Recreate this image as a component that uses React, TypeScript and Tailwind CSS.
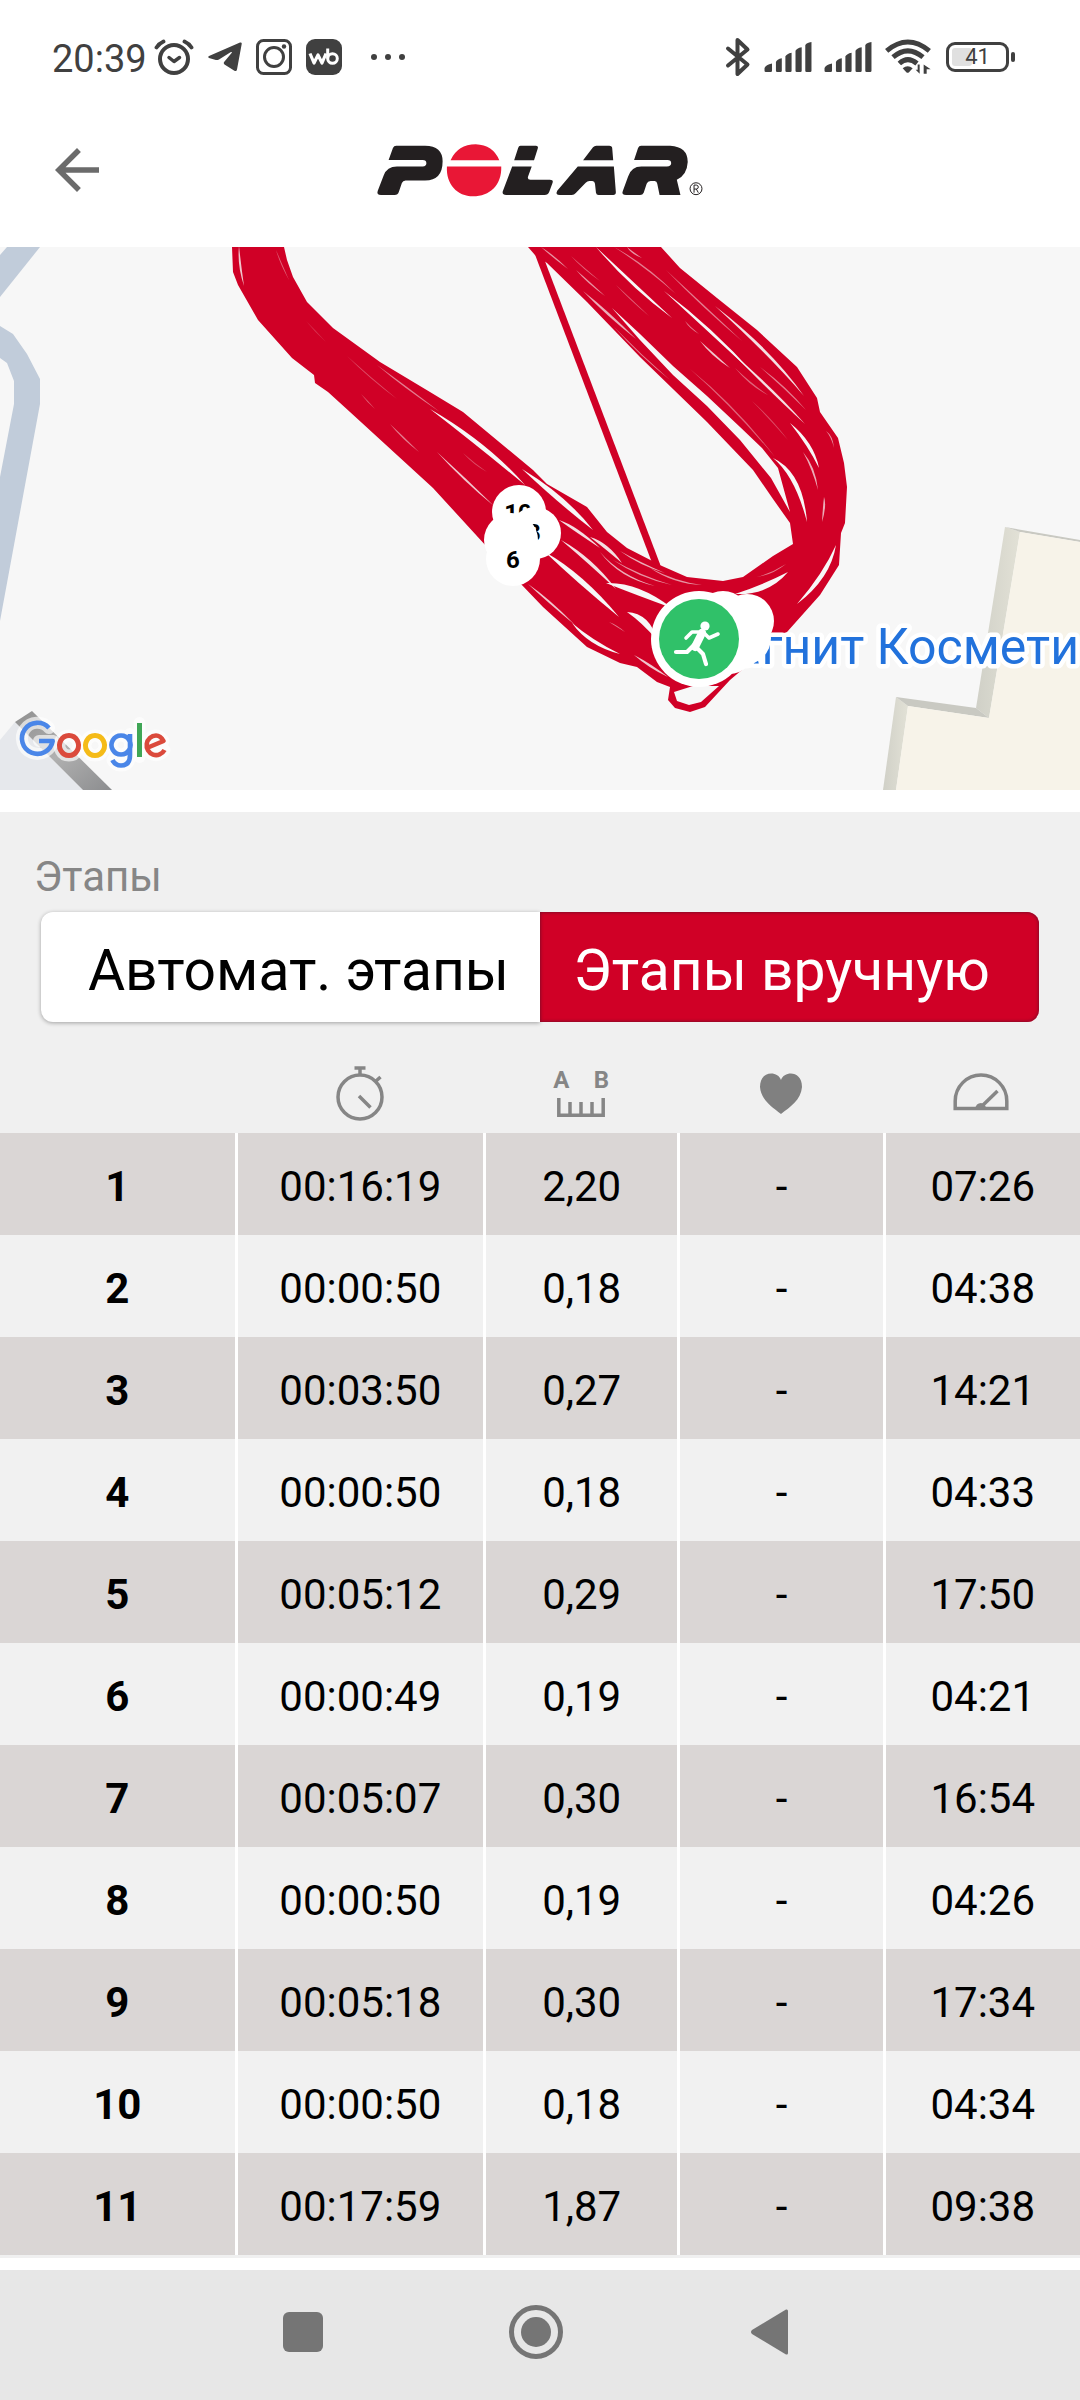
import React, { useState } from "react";

const INK = "#404040";
const ROUTE = "#d00026";
const LAND = "#f7f7f7";

const laps = [
  { n: 1, time: "00:16:19", dist: "2,20", hr: "-", pace: "07:26" },
  { n: 2, time: "00:00:50", dist: "0,18", hr: "-", pace: "04:38" },
  { n: 3, time: "00:03:50", dist: "0,27", hr: "-", pace: "14:21" },
  { n: 4, time: "00:00:50", dist: "0,18", hr: "-", pace: "04:33" },
  { n: 5, time: "00:05:12", dist: "0,29", hr: "-", pace: "17:50" },
  { n: 6, time: "00:00:49", dist: "0,19", hr: "-", pace: "04:21" },
  { n: 7, time: "00:05:07", dist: "0,30", hr: "-", pace: "16:54" },
  { n: 8, time: "00:00:50", dist: "0,19", hr: "-", pace: "04:26" },
  { n: 9, time: "00:05:18", dist: "0,30", hr: "-", pace: "17:34" },
  { n: 10, time: "00:00:50", dist: "0,18", hr: "-", pace: "04:34" },
  { n: 11, time: "00:17:59", dist: "1,87", hr: "-", pace: "09:38" },
];

function SignalBars() {
  return (
    <svg viewBox="0 0 144 92" className="h-[30px] w-12" fill={INK} aria-hidden="true">
      <path d="M0 80Q4 70 23 66V88Q23 92 19 92H4Q0 92 0 88ZM35 61Q38 53 53 50V88Q53 92 49 92H39Q35 92 35 88ZM64 44Q68 36 83 33V88Q83 92 79 92H68Q64 92 64 88ZM95 27Q98 19 114 16V88Q114 92 110 92H99Q95 92 95 88ZM125 10Q128 2 144 0V88Q144 92 140 92H129Q125 92 125 88Z" />
    </svg>
  );
}

function StatusBar() {
  return (
    <div className="flex h-[93px] items-center pt-5 pr-[65px] pl-[52px] text-[#404040]">
      <span className="pt-1 text-[38px] leading-10">20:39</span>
      <svg viewBox="0 0 40 36" className="ml-[7px] h-9 w-10" fill="none" stroke={INK} strokeLinecap="round" aria-hidden="true">
        <circle cx="20" cy="20" r="14" strokeWidth="4" />
        <path d="M15 18.500l5 4 5.500-4" strokeWidth="3.500" strokeLinejoin="round" />
        <path d="M2.500 8.500Q5 4.500 9.500 2.500M37.500 8.500Q35 4.500 30.500 2.500" strokeWidth="3.800" />
      </svg>
      <svg viewBox="0 0 34 30" className="ml-[14px] h-[30px] w-[34px]" fill={INK} aria-hidden="true">
        <path d="M1 14L32 .5Q34 0 33.700 2L29 27.500Q28.500 30 26 28.500L16.500 22.500Q15 21 16.500 19.500L24 10.500Q24 9.500 22.500 10.200L11 17.500Q9 18.500 7 17.800L1 16Q-.5 15 1 14Z" />
      </svg>
      <svg viewBox="0 0 36 36" className="ml-[14px] size-9" fill="none" stroke={INK} aria-hidden="true">
        <rect x="1.500" y="1.500" width="33" height="33" rx="6" strokeWidth="3" />
        <circle cx="18" cy="18" r="9.500" strokeWidth="3" />
        <circle cx="28" cy="7.500" r="2.200" fill={INK} stroke="none" />
      </svg>
      <svg viewBox="0 0 36 36" className="ml-[14px] size-9" aria-hidden="true">
        <rect width="36" height="36" rx="9" fill={INK} />
        <path d="M4 14.500l4 9.500 4-8 4 8 4-9.500" fill="none" stroke="#fff" strokeWidth="3.200" strokeLinejoin="round" />
        <circle cx="26.500" cy="19.500" r="4.800" fill="none" stroke="#fff" strokeWidth="3" />
        <path d="M21.700 9.500v10" stroke="#fff" strokeWidth="3" />
      </svg>
      <svg viewBox="0 0 36 8" className="ml-7 h-2 w-9" fill={INK} aria-hidden="true">
        <circle cx="4" cy="4" r="3" />
        <circle cx="18" cy="4" r="3" />
        <circle cx="32" cy="4" r="3" />
      </svg>
      <svg viewBox="0 0 26 40" className="ml-auto h-10 w-[26px]" fill="none" stroke={INK} strokeWidth="4" strokeLinejoin="round" strokeLinecap="round" aria-hidden="true">
        <path d="M3 11.500L22.500 27.500L12.500 37V3L22.500 12.500L3 28.500" />
      </svg>
      <div className="ml-[13px] flex items-center gap-3">
        <SignalBars />
        <SignalBars />
      </div>
      <svg viewBox="0 0 138 104" className="ml-[13px] h-[35px] w-[46px]" fill="none" stroke={INK} strokeWidth="15" aria-hidden="true">
        <path d="M5 35Q68 -18 133 35M24 54Q68 16 114 54M43 73Q68 50 96 73" />
        <path d="M53 87Q68 75 83 87L72 99Q68 103 64 99Z" fill={INK} stroke="none" />
        <path d="M104 76V104L92 92H98V76ZM116 104V76L137 90H125V104Z" fill={INK} stroke="none" />
      </svg>
      <div className="ml-[15px] flex items-center gap-[2px]">
        <div className="relative flex h-[30px] w-[63px] items-center justify-center rounded-[9px] border-3 border-[#404040]">
          <div className="absolute top-[3px] bottom-[3px] left-[3px] w-5 rounded-[3px] bg-[#e0e0e0]" />
          <span className="relative text-[22px] leading-6">41</span>
        </div>
        <div className="h-[10px] w-1 rounded-[2px] bg-[#404040]" />
      </div>
    </div>
  );
}

function BrandLogo() {
  return (
    <svg viewBox="20 40 984 160" className="h-[53px] w-[328px]" role="img" aria-label="Polar" fill="#231f20">
      <path d="M78 45H165Q218 46 218 92Q218 150 165 150H106Q98 150 95 158L86 184Q83 194 73 194H32Q18 194 22 182L40 135Q50 108 80 108H158Q169 107 169 98Q169 88 158 88H55L68 52Q71 45 78 45Z" />
      <path d="M242 89Q264 41 318 41Q370 43 389 89Z M231 108H395C397 165 360 198 310 198C262 198 228 162 231 108Z" fill="#e91736" />
      <path d="M453 45H500Q508 45 505 54L494 89H434L446 52Q448 45 453 45ZM428 108H487L476 138Q473 148 483 148H542Q553 148 550 157L540 184Q536 194 526 194H410Q396 194 400 182Z" />
      <path d="M682 45H721Q730 45 730 53L733 89H642L672 50Q676 45 682 45ZM626 108H735L741 186Q741 194 733 194H689Q682 194 681 187L678 160Q677 152 670 152H661Q655 152 650 157L620 188Q615 194 608 194H572Q557 194 564 181Z" />
      <path d="M817 45H905Q958 48 958 94Q956 133 925 148L936 194H873L866 160Q865 152 858 152H846Q837 152 834 160L825 187Q822 194 814 194H772Q757 194 762 182L778 138Q788 108 818 108H895Q908 107 908 98Q908 88 897 88H796L808 52Q811 45 817 45Z" />
      <circle cx="983" cy="175" r="18" fill="none" stroke="#231f20" strokeWidth="3" />
      <path d="M977 187V164H984Q990 165 990 170Q990 175 984 176H977M984 176L990 187" fill="none" stroke="#231f20" strokeWidth="3" />
    </svg>
  );
}

// A tapered gap between neighbouring tracks: start, middle and end point, width, opacity.
type Gap = [number, number, number, number, number, number, number, number];

const gaps: Gap[] = [
  [430, 409, 485, 446, 525, 485, 9, 1],
  [522, 469, 563, 500, 593, 530, 11, 1],
  [377, 365, 405, 387, 440, 412, 3, 0.5],
  [437, 452, 465, 480, 494, 506, 4, 0.8],
  [390, 424, 403, 438, 419, 452, 3, 0.5],
  [347, 356, 370, 378, 397, 399, 2, 0.3],
  [239, 246, 239, 265, 244, 286, 4, 0.8],
  [276, 250, 281, 264, 289, 280, 2, 0.4],
  [306, 321, 315, 331, 326, 342, 2, 0.2],
  [361, 394, 368, 402, 375, 409, 2, 0.4],
  [463, 453, 474, 464, 487, 472, 2, 0.3],
  [545, 552, 580, 578, 619, 617, 11, 1],
  [559, 520, 575, 528, 600, 548, 6, 0.9],
  [561, 540, 590, 560, 616, 589, 7, 0.9],
  [600, 552, 620, 577, 655, 586, 3, 0.7],
  [606, 583, 636, 588, 672, 608, 13, 1],
  [627, 612, 646, 618, 657, 640, 12, 1],
  [590, 537, 606, 545, 622, 563, 7, 0.9],
  [620, 551, 640, 564, 665, 573, 3, 0.7],
  [613, 560, 640, 577, 672, 585, 3, 0.6],
  [650, 568, 675, 583, 702, 585, 3, 0.6],
  [528, 584, 548, 600, 575, 625, 4, 0.8],
  [572, 623, 590, 643, 620, 654, 7, 1],
  [609, 622, 617, 626, 625, 632, 2, 0.5],
  [634, 655, 650, 666, 668, 677, 5, 0.8],
  [735, 594, 766, 590, 788, 572, 12, 1],
  [757, 577, 772, 574, 786, 564, 2, 0.5],
  [797, 604, 827, 576, 836, 545, 9, 1],
  [596, 247, 632, 285, 672, 318, 6, 1],
  [664, 291, 711, 330, 755, 375, 6, 1],
  [730, 351, 774, 392, 805, 424, 5, 0.9],
  [583, 291, 607, 313, 636, 339, 5, 0.7],
  [614, 327, 640, 355, 670, 380, 2, 0.5],
  [715, 306, 770, 352, 804, 396, 6, 0.9],
  [790, 423, 811, 444, 819, 468, 7, 1],
  [803, 452, 814, 468, 818, 490, 4, 0.7],
  [773, 458, 799, 474, 807, 522, 9, 1],
  [700, 341, 713, 355, 730, 368, 4, 0.8],
  [576, 270, 588, 282, 605, 296, 3, 0.6],
  [541, 247, 553, 256, 568, 269, 3, 0.6],
  [571, 256, 583, 268, 600, 281, 2, 0.4],
  [616, 285, 630, 299, 649, 316, 2, 0.4],
  [614, 247, 645, 265, 676, 294, 3, 0.5],
  [627, 247, 632, 253, 642, 258, 3, 0.6],
  [666, 270, 705, 308, 742, 341, 3, 0.5],
  [685, 321, 690, 328, 699, 334, 2, 0.5],
  [760, 367, 785, 387, 806, 410, 3, 0.5],
  [690, 369, 735, 407, 775, 457, 3, 0.4],
  [735, 368, 752, 386, 768, 395, 3, 0.4],
  [752, 401, 770, 418, 788, 440, 2, 0.3],
  [826, 431, 832, 436, 834, 448, 2, 0.6],
  [824, 497, 825, 505, 822, 522, 4, 0.7],
];

function gapPath([ax, ay, mx, my, bx, by, w]: Gap) {
  const len = Math.hypot(bx - ax, by - ay);
  const nx = (-(by - ay) / len) * (w / 2);
  const ny = ((bx - ax) / len) * (w / 2);
  return `M${ax} ${ay}Q${mx + nx} ${my + ny} ${bx} ${by}Q${mx - nx} ${my - ny} ${ax} ${ay}Z`;
}

function GoogleMark() {
  const strokes: [string, string, number][] = [
    ["M49 728A15.500 15.500 0 1 0 52.700 741H39", "#4a86e8", 4.6],
    ["M69 735.500a9.500 10 0 1 0 .01 0Z", "#db4a3c", 5],
    ["M95 735.500a9.500 10 0 1 0 .01 0Z", "#f5bb18", 5],
    ["M121 735.500a9.500 9.500 0 1 0 .01 0ZM130 734V755Q130 765.500 121 765.500Q115 765.500 112.500 760", "#4a86e8", 4.6],
    ["M139.500 723V757", "#40a656", 5],
    ["M148 747.500L163.500 741Q160.500 735.500 156 735.500A9.500 9.800 0 1 0 164.500 750", "#db4a3c", 4.6],
  ];
  return (
    <g fill="none" strokeLinejoin="round">
      {strokes.map(([d]) => (
        <path key={d} d={d} stroke="#fff" strokeOpacity="0.65" strokeWidth="12" strokeLinecap="round" />
      ))}
      {strokes.map(([d, c, w]) => (
        <path key={d} d={d} stroke={c} strokeWidth={w} />
      ))}
    </g>
  );
}

function RouteMap() {
  return (
    <svg viewBox="0 247 1080 543" className="block w-full" role="img" aria-label="Карта тренировки">
      <defs>
        <linearGradient id="wall" x1="0" y1="0" x2="1" y2="0">
          <stop offset="0" stopColor="#d0d0c7" />
          <stop offset="1" stopColor="#e2e1d6" />
        </linearGradient>
        <linearGradient id="kerb" x1="0" y1="0" x2="1" y2="1">
          <stop offset="0" stopColor="#8f8f8f" />
          <stop offset="0.500" stopColor="#b0b0b0" />
          <stop offset="1" stopColor="#8c8d8f" />
        </linearGradient>
      </defs>
      <rect x="0" y="247" width="1080" height="543" fill={LAND} />
      <g fill="#c1ccda">
        <path d="M0 255L7 247H40L0 297Z" />
        <path d="M0 326L13 334L27 354L40 379V404L0 621V477L14 404V381L7 363L0 358Z" />
      </g>
      <path d="M0 740L15 722L83 790H0Z" fill="#e6e8ec" />
      <path d="M15 722L32 711L112 790H83Z" fill="url(#kerb)" />
      <path d="M1005 527L1020 532L989 718L976 708Z" fill="url(#wall)" />
      <path d="M896 697L908 706L896 790H883Z" fill="url(#wall)" />
      <path d="M896 697L976 708L989 718L908 706Z" fill="#c9c9c2" />
      <path d="M1005 527L1080 540V542L1020 532Z" fill="#c9c9c2" />
      <path d="M1020 532L1080 542V790H896L908 706L989 718Z" fill="#f7f3e9" />

      <path
        d="M528 247L535 255L547 263L587 302L640 357L707 422L753 470L773 499L790 523L793 544L773 556L743 577L723 581L687 577L662 566L627 548L607 532L587 507L547 484L533 470L463 412L430 392L380 362L333 328L307 302L293 277L287 260L284 247H232L233 272L238 285L258 320L292 358L314 375L315 383L328 392L350 412L433 488L487 547L520 583L543 607L587 647L620 663L637 667L657 682L670 687L668 700L675 708L690 712L705 707L730 680L787 632L820 595L839 565L841 533L845 523L847 487L844 463L838 438L820 412L817 398L797 367L757 330L717 298L680 268L661 247Z"
        fill={ROUTE}
      />
      <path d="M537 250L657 566" stroke={ROUTE} strokeWidth="7" />
      <g fill={LAND}>
        <path d="M612 308L640 334L673 366L707 396L740 427L762 448L778 468L790 512L771 478L740 440L707 406L673 375L640 340Z" />
        <path d="M674 692L693 686L719 686L701 702L689 705L677 701Z" />
        {gaps.map((g) => (
          <path key={g.join()} d={gapPath(g)} opacity={g[7]} />
        ))}
      </g>

      <text x="1079" y="664" textAnchor="end" fontSize="50" fill="#2272dc" stroke="#fff" strokeWidth="9" strokeLinejoin="round" paintOrder="stroke">
        Магнит Космети
      </text>

      <g fontSize="24" fontWeight="700" textAnchor="middle">
        <circle cx="519" cy="512" r="27" fill="#fff" />
        <text x="518" y="521">10</text>
        <circle cx="535" cy="533" r="26" fill="#fff" />
        <text x="534" y="541">8</text>
        <circle cx="511" cy="540" r="27" fill="#fff" />
        <circle cx="513" cy="559" r="27" fill="#fff" />
        <text x="513" y="568">6</text>
      </g>
      <g fill="#fff">
        <circle cx="723" cy="618" r="27" />
        <circle cx="747" cy="621" r="27" />
        <circle cx="744" cy="638" r="27" />
        <circle cx="729" cy="647" r="27" />
        <circle cx="699" cy="639" r="48" />
      </g>
      <circle cx="699" cy="639" r="40" fill="#30c169" />
      <circle cx="705" cy="626" r="4.600" fill="#fff" />
      <g fill="none" stroke="#fff" strokeLinecap="round" strokeLinejoin="round">
        <path d="M702 633L695 647" strokeWidth="8" />
        <path d="M703 632H692L686 638M704 633L709 638L718 634" strokeWidth="3.600" />
        <path d="M694 645L687 652H676M697 648L703 654L706 664" strokeWidth="4.200" />
      </g>
      <GoogleMark />
    </svg>
  );
}

function StopwatchIcon() {
  return (
    <svg viewBox="0 0 48 55" className="h-[55px] w-12" fill="none" stroke="#868686" role="img" aria-label="Время">
      <ellipse cx="24" cy="31" rx="22" ry="22" strokeWidth="3.500" />
      <path d="M18.500 2H29.500M24 2V9" strokeWidth="3.500" />
      <path d="M40 15L44.500 11M23 30L34.500 41.500" strokeWidth="3.500" />
    </svg>
  );
}

function DistanceIcon() {
  return (
    <div role="img" aria-label="Расстояние" className="flex h-[55px] flex-col items-center justify-between pb-1">
      <div className="flex w-14 justify-between text-2xl leading-7 font-bold text-[#868686]">
        <span>A</span>
        <span>B</span>
      </div>
      <svg viewBox="0 0 48 19" className="h-[19px] w-12" fill="none" stroke="#868686" strokeWidth="3.500" aria-hidden="true">
        <path d="M1.800 0V17.200H46.200V0M13 4V17M24 4V17M35 4V17" />
      </svg>
    </div>
  );
}

function HeartIcon() {
  return (
    <svg viewBox="0 0 44 55" className="h-[55px] w-11" fill="#808080" role="img" aria-label="Пульс">
      <path d="M22 14C25 5 43 4 43 21C42 34 31 41 22 48C13 41 2 34 1 21C1 4 19 5 22 14Z" />
    </svg>
  );
}

function PaceIcon() {
  return (
    <svg viewBox="0 0 56 55" className="h-[55px] w-14" fill="none" stroke="#868686" strokeWidth="3.500" role="img" aria-label="Темп">
      <path d="M2.200 42.500V35A25.800 26 0 0 1 53.800 35V42.500Z" />
      <path d="M28 41L44.500 25" strokeWidth="3.500" />
      <path d="M22 43Q23 37 28 37Q33 38 33 43Z" fill="#868686" stroke="none" />
    </svg>
  );
}

export default function App() {
  const [mode, setMode] = useState<"auto" | "manual">("manual");
  const on = "bg-[#d00026] text-white shadow-[inset_0_0_3px_1px_#8a0a28]";
  const off = "bg-white text-black shadow-[0_1px_4px_#00000055]";

  return (
    <div className="flex min-h-screen w-full flex-col overflow-x-hidden bg-white font-['Roboto',sans-serif] text-black">
      <StatusBar />

      <header className="grid h-[154px] grid-cols-[1fr_auto_1fr] items-center">
        <button type="button" aria-label="Назад" className="ml-[45px] flex size-16 items-center justify-center">
          <svg viewBox="4 4 16 16" className="size-11" fill="#6b6b6b" aria-hidden="true">
            <path d="M20 11H7.830l5.590-5.590L12 4l-8 8 8 8 1.410-1.410L7.830 13H20v-2z" />
          </svg>
        </button>
        <BrandLogo />
      </header>

      <RouteMap />

      <main className="mt-[22px] bg-[#f0f0f0] pb-[3px]">
        <h2 className="px-[34px] pt-[41px] text-[42px] leading-[48px] text-[#868686]">Этапы</h2>
        <div role="group" aria-label="Этапы" className="mx-[41px] mt-[11px] grid h-[110px] grid-cols-2 text-[57px] leading-[64px] whitespace-nowrap">
          <button type="button" aria-pressed={mode === "auto"} onClick={() => setMode("auto")} className={`rounded-l-xl pt-2 pl-4 ${mode === "auto" ? on : off}`}>
            Автомат. этапы
          </button>
          <button type="button" aria-pressed={mode === "manual"} onClick={() => setMode("manual")} className={`rounded-r-xl pt-2 pr-4 ${mode === "manual" ? on : off}`}>
            Этапы вручную
          </button>
        </div>

        <table className="w-full table-fixed border-separate border-spacing-0 text-center text-[42px] leading-[48px]">
          <colgroup>
            <col className="w-[22%]" />
            <col className="w-[23%]" />
            <col className="w-[18%]" />
            <col className="w-[19%]" />
            <col className="w-[18%]" />
          </colgroup>
          <thead>
            <tr className="h-[111px]">
              <th aria-label="Этап" />
              <th scope="col"><div className="flex justify-center pt-8 pr-1"><StopwatchIcon /></div></th>
              <th scope="col"><div className="flex justify-center pt-8 pr-1"><DistanceIcon /></div></th>
              <th scope="col"><div className="flex justify-center pt-8 pr-1"><HeartIcon /></div></th>
              <th scope="col"><div className="flex justify-center pt-8 pr-1"><PaceIcon /></div></th>
            </tr>
          </thead>
          <tbody>
            {laps.map((lap) => (
              <tr key={lap.n} className="h-[102px] odd:bg-[#dad6d5] even:bg-[#f1f1f1]">
                <th scope="row" className="border-r-3 border-white pt-[6px] font-bold">{lap.n}</th>
                <td className="border-r-3 border-white pt-[6px]">{lap.time}</td>
                <td className="border-r-3 border-white pt-[6px]">{lap.dist}</td>
                <td className="border-r-3 border-white pt-[6px]">{lap.hr}</td>
                <td className="pt-[6px]">{lap.pace}</td>
              </tr>
            ))}
          </tbody>
        </table>
      </main>

      <nav aria-label="Системная навигация" className="mt-3 flex min-h-[130px] flex-1 items-center justify-center gap-[179px] bg-[#e7e7e7] pr-2 pb-[6px]">
        <button type="button" aria-label="Недавние" className="flex size-[54px] items-center justify-center">
          <span className="size-10 rounded-[6px] bg-[#757575]" />
        </button>
        <button type="button" aria-label="Домой" className="flex size-[54px] items-center justify-center rounded-full border-5 border-[#757575]">
          <span className="size-[30px] rounded-full bg-[#757575]" />
        </button>
        <button type="button" aria-label="Назад" className="flex size-[54px] items-center justify-center">
          <svg viewBox="0 0 37 46" className="h-[46px] w-[37px]" fill="#757575" aria-hidden="true">
            <path d="M35 .5Q37 0 37 2V44Q37 46 35 45.500L1 25Q-1 23 1 21Z" />
          </svg>
        </button>
      </nav>
    </div>
  );
}
